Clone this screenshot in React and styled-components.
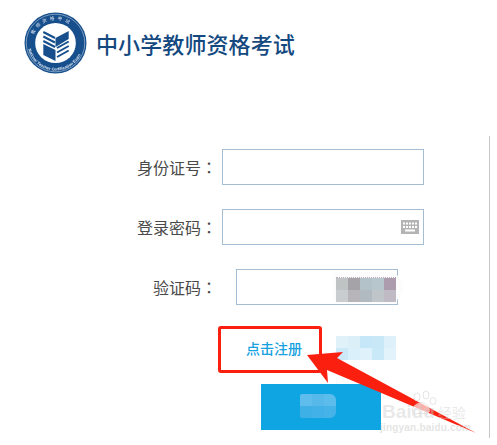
import React from "react";
import styled, { createGlobalStyle } from "styled-components";

const Global = createGlobalStyle`
  html, body { margin: 0; padding: 0; background: #fff; }
  body { font-family: "Liberation Sans", "Noto Sans CJK SC", sans-serif; }
`;

const Page = styled.div`
  position: relative;
  width: 497px;
  height: 445px;
  overflow: hidden;
  background: #fff;
`;

const Header = styled.header`
  display: flex;
  align-items: center;
  gap: 9px;
  padding: 12px 0 0 24px;
  height: 62px;
`;

const LogoMark = styled.svg`
  flex: none;
  filter: blur(0.25px);
`;

const Title = styled.h1`
  margin: 0;
  font: 500 22px/1 "Noto Sans CJK SC", sans-serif;
  letter-spacing: 0.1px;
  color: #14497f;
`;

const Form = styled.form`
  display: flex;
  flex-direction: column;
  gap: 24px;
  padding: 75px 0 0 0;
`;

const Row = styled.div`
  display: flex;
  align-items: center;
  height: 36px;
`;

const Label = styled.label`
  width: 217px;
  flex: none;
  text-align: right;
  font: 400 16px/1 "Noto Sans CJK SC", sans-serif;
  color: #4a4a4a;
`;

const Colon = styled.span`
  font-family: "Noto Sans CJK TC", sans-serif;
`;

const InputBox = styled.div`
  position: relative;
  box-sizing: border-box;
  height: 36px;
  width: ${(p) => p.$width}px;
  margin-left: ${(p) => p.$offset}px;
  border: 1px solid #a5bdd3;
  background: #fff;
`;

const KeyboardSlot = styled.span`
  position: absolute;
  right: 4px;
  top: 10px;
  display: block;
  width: 18px;
  height: 14px;
`;

const MosaicGrid = styled.div`
  display: grid;
  grid-template-columns: repeat(${(p) => p.$cols}, ${(p) => p.$cell}px);
  grid-auto-rows: ${(p) => p.$cell}px;
`;

const CaptchaBlob = styled.div`
  position: absolute;
  left: 96px;
  top: 2px;
  width: 70px;
  height: 31px;
  border-radius: 4px 16px 16px 4px;
  background: #fcfcfd;
`;

const CaptchaMosaic = styled(MosaicGrid)`
  position: absolute;
  left: 99px;
  top: 7px;
  border-top: 1px dotted #b9a9bd;
  filter: blur(0.3px);
`;

const ActionRow = styled.div`
  display: flex;
  align-items: center;
  height: 47px;
  margin: 21px 0 0 218px;
`;

const RegisterBox = styled.a`
  box-sizing: border-box;
  width: 104px;
  height: 47px;
  display: flex;
  align-items: center;
  justify-content: center;
  border: 3px solid #fb1f10;
  border-radius: 3px;
  padding: 0 0 4px 8px;
  font: 500 14px/1 "Noto Sans CJK SC", sans-serif;
  color: #17a2df;
`;

const SoftMosaic = styled(MosaicGrid)`
  margin: 0 0 3px 14px;
  filter: blur(0.4px);
`;

const SubmitRow = styled.div`
  display: flex;
  padding: 11px 0 0 261px;
`;

const SubmitButton = styled.button`
  width: 120px;
  height: 46px;
  border: 0;
  padding: 0;
  background: #0fa5e3;
  display: flex;
  align-items: center;
  justify-content: center;
`;

const ButtonMosaic = styled(MosaicGrid)`
  border-radius: 2px 6px 6px 2px;
  overflow: hidden;
  position: relative;
  left: -3px;
  top: -1px;
`;

const Overlay = styled.svg`
  position: absolute;
  left: 0;
  top: 0;
  pointer-events: none;
`;

const EdgeLine = styled.div`
  position: absolute;
  left: 489px;
  top: 136px;
  bottom: 7px;
  width: 1px;
  background: #c6c6c6;
`;

const WatermarkMain = styled.div`
  position: absolute;
  left: 382px;
  top: 403px;
  height: 18px;
  font: 700 19px/18px "Liberation Sans", sans-serif;
  color: rgba(205, 205, 205, 0.45);
  display: flex;
  align-items: center;
  gap: 3px;
`;

const WatermarkCjk = styled.span`
  font: 400 14px/18px "Noto Sans CJK SC", sans-serif;
`;

const WatermarkUrl = styled.div`
  position: absolute;
  left: 380px;
  top: 423px;
  font: 700 10px/10px "Liberation Sans", sans-serif;
  letter-spacing: 0.2px;
  color: rgba(205, 205, 205, 0.55);
`;

function Mosaic({ as: Comp, cols, cell, colors }) {
  return (
    <Comp $cols={cols} $cell={cell}>
      {colors.map((c, i) => (
        <span key={i} style={{ background: c }} />
      ))}
    </Comp>
  );
}

function Logo() {
  return (
    <LogoMark width="63" height="62" viewBox="0 0 62 62" preserveAspectRatio="none">
      <defs>
        <path id="logo-top" d="M8 31a23 23 0 0 1 46 0" />
        <path id="logo-bottom" d="M3.5 31a27.5 27.5 0 0 0 55 0" />
      </defs>
      <circle cx="31" cy="31" r="30.5" fill="#174f8d" />
      <circle cx="31" cy="31" r="28.8" fill="none" stroke="#dbe5f0" strokeWidth="0.5" />
      <circle cx="31" cy="31" r="20" fill="#fff" />
      <text fontSize="4.5" fontFamily="Noto Sans CJK SC, sans-serif" fill="#dfe8f2" letterSpacing="2.8">
        <textPath href="#logo-top" startOffset="12%">教师资格考试</textPath>
      </text>
      <text fontSize="4" fontWeight="700" fontFamily="Liberation Sans, sans-serif" fill="#dfe8f2">
        <textPath href="#logo-bottom" startOffset="7%">National Teacher Certification Exam</textPath>
      </text>
      <g fill="#174f8d">
        <path d="M19 32 L31 38 L31 49 L19 43 Z" />
        <path d="M31 26 L44 19 L44 27 L31 35 Z" />
      </g>
      <g stroke="#174f8d" strokeWidth="2" fill="none">
        <path d="M19 20 L30.5 26" />
        <path d="M19 24.5 L30.5 30.5" />
        <path d="M19 29 L30.5 35" />
        <path d="M32.5 40.5 L44 34" />
        <path d="M32.5 45 L44 38.5" />
        <path d="M32.5 36 L44 29.5" />
      </g>
    </LogoMark>
  );
}

function KeyboardIcon() {
  return (
    <svg width="18" height="14" viewBox="0 0 18 14">
      <rect width="18" height="14" fill="#b4b4b4" />
      <g fill="#fff">
        <rect x="2" y="2.5" width="2" height="2" /><rect x="5" y="2.5" width="2" height="2" />
        <rect x="8" y="2.5" width="2" height="2" /><rect x="11" y="2.5" width="2" height="2" /><rect x="14" y="2.5" width="2" height="2" />
        <rect x="2" y="6" width="2" height="2" /><rect x="5" y="6" width="2" height="2" />
        <rect x="8" y="6" width="2" height="2" /><rect x="11" y="6" width="2" height="2" /><rect x="14" y="6" width="2" height="2" />
        <rect x="4" y="9.5" width="10" height="2" />
      </g>
    </svg>
  );
}

const captchaColors = ["#bfc3c4","#a5a3a7","#b3c1c9","#b6c6cc","#ad9cad","#c9cdd0","#b8b5ba","#b1bac1","#bfc5c8","#bfbac3"];
const softColors = ["#e0f1fa","#dbeff9","#c6e7f7","#c9e8f7","#def1fa","#cbe9f8","#daf0fa","#dff1fa","#cae9f8","#e2f3fb"];
const buttonColors = ["#5ebdec","#57b9ea","#5cbceb","#3fb0e6","#42b1e7","#45b3e7"];

export default function App() {
  return (
    <Page>
      <Global />
      <Header>
        <Logo />
        <Title>中小学教师资格考试</Title>
      </Header>
      <Form>
        <Row>
          <Label>身份证号<Colon>：</Colon></Label>
          <InputBox $width={202} $offset={5} />
        </Row>
        <Row>
          <Label>登录密码<Colon>：</Colon></Label>
          <InputBox $width={202} $offset={5}>
            <KeyboardSlot><KeyboardIcon /></KeyboardSlot>
          </InputBox>
        </Row>
        <Row>
          <Label>验证码<Colon>：</Colon></Label>
          <InputBox $width={162} $offset={19}>
            <CaptchaBlob />
            <Mosaic as={CaptchaMosaic} cols={5} cell={12} colors={captchaColors} />
          </InputBox>
        </Row>
      </Form>
      <ActionRow>
        <RegisterBox>点击注册</RegisterBox>
        <Mosaic as={SoftMosaic} cols={5} cell={12} colors={softColors} />
      </ActionRow>
      <SubmitRow>
        <SubmitButton type="button">
          <Mosaic as={ButtonMosaic} cols={3} cell={12} colors={buttonColors} />
        </SubmitButton>
      </SubmitRow>
      <EdgeLine />
      <Overlay width="497" height="445" viewBox="0 0 497 445">
        <polygon
          points="307,355 343,352 337,358 476,433 327,370 328,383"
          fill="#fb1f10"
        />
        <g fill="rgba(255,255,255,0.65)" stroke="rgba(205,205,205,0.55)" strokeWidth="1">
          <ellipse cx="417" cy="397" rx="3" ry="4" />
          <ellipse cx="426" cy="395" rx="3" ry="4" />
          <ellipse cx="433" cy="401" rx="3" ry="3.5" />
          <path d="M414 406 q7 -7 14 0 q4 5 -1 8 q-6 -2 -12 0 q-5 -3 -1 -8 Z" />
        </g>
      </Overlay>
      <WatermarkMain>Baidu<WatermarkCjk>经验</WatermarkCjk></WatermarkMain>
      <WatermarkUrl>jingyan.baidu.com</WatermarkUrl>
    </Page>
  );
}
